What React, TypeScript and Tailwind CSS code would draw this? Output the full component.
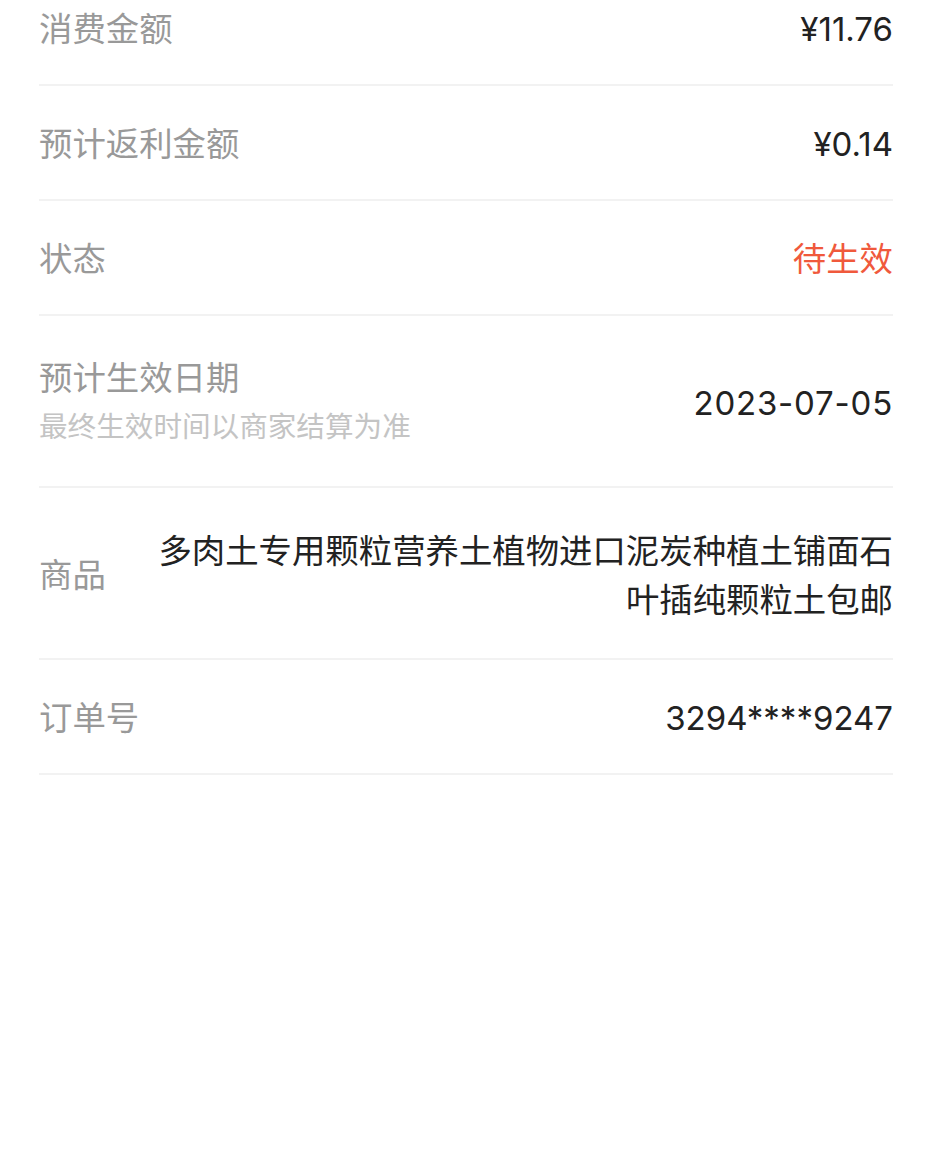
const font = { fontFamily: '"Noto Sans CJK SC", "Noto Sans", sans-serif' };
const num = { fontFamily: 'Inter, "Noto Sans CJK SC", sans-serif' };

function Row({ label, children }: { label: string; children: React.ReactNode }) {
  return (
    <div className="flex items-center justify-between border-b-2 border-[#f2f2f2] h-[115px]">
      <span className="text-[33.4px] text-[#999999] shrink-0">{label}</span>
      {children}
    </div>
  );
}

export default function App() {
  return (
    <div className="w-[932px] h-[1166px] bg-white overflow-hidden" style={font}>
      <div className="px-[39px] mt-[-29px]">
        <Row label="消费金额">
          <span className="text-[33px] text-[#222222] pt-[5px]" style={num}>¥11.76</span>
        </Row>
        <Row label="预计返利金额">
          <span className="text-[33px] text-[#222222] pt-[5px]" style={num}>¥0.14</span>
        </Row>
        <Row label="状态">
          <span className="text-[33.4px] text-[#f0593c]">待生效</span>
        </Row>
        <div className="flex items-center justify-between border-b-2 border-[#f2f2f2] h-[172px]">
          <div className="flex flex-col pt-[2px]">
            <span className="text-[33.4px] leading-[46px] text-[#999999]">预计生效日期</span>
            <span className="text-[28.6px] leading-[52px] text-[#c4c4c4]">最终生效时间以商家结算为准</span>
          </div>
          <span className="text-[33px] text-[#222222] pt-[5px] tracking-[0.8px]" style={num}>2023-07-05</span>
        </div>
        <div className="flex items-center justify-between border-b-2 border-[#f2f2f2] h-[172px]">
          <span className="text-[33.4px] text-[#999999] shrink-0">商品</span>
          <span className="text-[33.4px] leading-[49px] text-[#222222] text-right ml-[50px]">
            多肉土专用颗粒营养土植物进口泥炭种植土铺面石叶插纯颗粒土包邮
          </span>
        </div>
        <Row label="订单号">
          <span className="text-[33px] text-[#222222] pt-[5px]" style={num}>3294****9247</span>
        </Row>
      </div>
    </div>
  );
}
